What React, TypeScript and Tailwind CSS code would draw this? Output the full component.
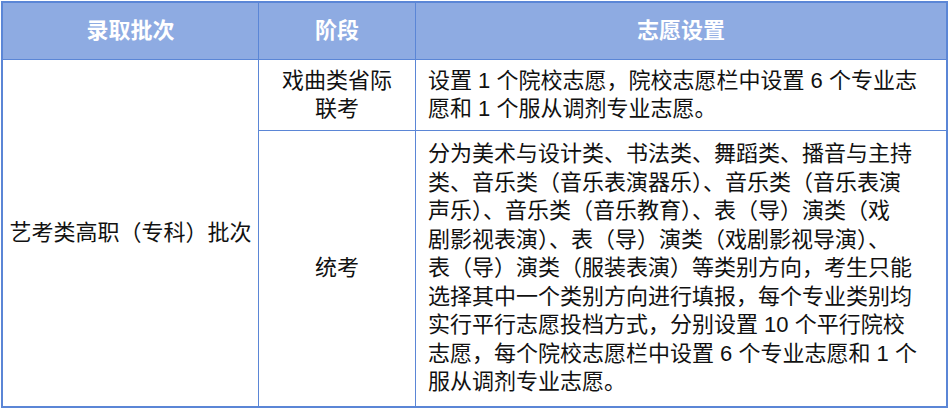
import React from 'react';

const font = { fontFamily: '"Liberation Sans", "Noto Sans CJK SC", sans-serif' };

const row1Lines = ['设置 1 个院校志愿，院校志愿栏中设置 6 个专业志', '愿和 1 个服从调剂专业志愿。'];

const row2Lines = [
    '分为美术与设计类、书法类、舞蹈类、播音与主持',
    '类、音乐类（音乐表演器乐）、音乐类（音乐表演',
    '声乐）、音乐类（音乐教育）、表（导）演类（戏',
    '剧影视表演）、表（导）演类（戏剧影视导演）、',
    '表（导）演类（服装表演）等类别方向，考生只能',
    '选择其中一个类别方向进行填报，每个专业类别均',
    '实行平行志愿投档方式，分别设置 10 个平行院校',
    '志愿，每个院校志愿栏中设置 6 个专业志愿和 1 个',
    '服从调剂专业志愿。'
];

export default function App() {
    return (
        <div className="w-[950px] h-[408px] bg-white pt-px pl-px" style={font}>
            <div className="w-[947px] grid grid-cols-[256px_157px_1fr] grid-rows-[57px_71px_275px] border-2 border-[#5b86d6] text-[22px] leading-[28.5px] text-[#111]">
                {/* header */}
                <div className="bg-[#8eabe2] text-white font-bold flex items-center justify-center border-r border-b border-[#5b86d6]">录取批次</div>
                <div className="bg-[#8eabe2] text-white font-bold flex items-center justify-center border-r border-b border-[#5b86d6]">阶段</div>
                <div className="bg-[#8eabe2] text-white font-bold flex items-center justify-center border-b border-[#5b86d6]">志愿设置</div>

                <div className="row-span-2 flex items-center justify-center border-r border-[#5b86d6] whitespace-nowrap">
                    艺考类高职（专科）批次
                </div>
                <div className="flex flex-col items-center justify-center border-r border-b border-[#5b86d6]">
                    <span>戏曲类省际</span>
                    <span>联考</span>
                </div>
                <div className="flex flex-col justify-center pl-3 border-b border-[#5b86d6] whitespace-nowrap">
                    {row1Lines.map((l) => (
                        <span key={l}>{l}</span>
                    ))}
                </div>

                <div className="flex items-center justify-center border-r border-[#5b86d6]">统考</div>
                <div className="flex flex-col justify-center pl-3 whitespace-nowrap">
                    {row2Lines.map((l) => (
                        <span key={l}>{l}</span>
                    ))}
                </div>
            </div>
        </div>
    );
}
